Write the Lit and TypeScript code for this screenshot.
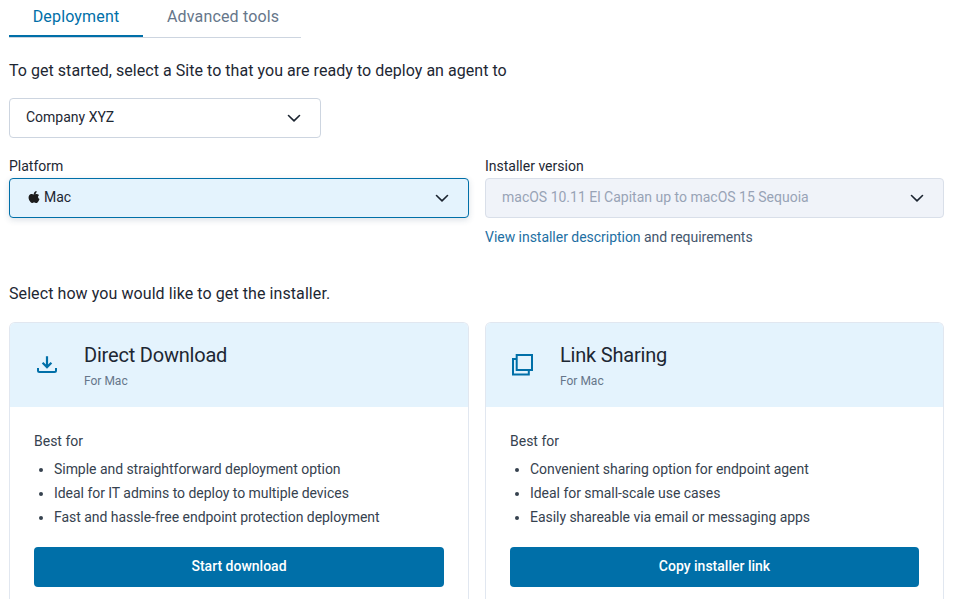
import { LitElement, html, css, svg } from "lit";
import { customElement } from "lit/decorators.js";

const chevron = html`<svg class="chev" width="16" height="16" viewBox="0 0 16 16" fill="none"><path d="M2.500 5.500 8 10.800l5.500-5.300" stroke="#1b2430" stroke-width="1.600" stroke-linecap="round" stroke-linejoin="round"/></svg>`;
const apple = html`<svg class="apple" width="14" height="14" viewBox="0 0 14 14"><path fill="#1c1c1c" d="M9.600 1c.1 1-.3 1.800-.8 2.400-.5.600-1.300 1-2 .9-.1-.9.3-1.800.8-2.300C8.100 1.400 8.900 1 9.600 1zM12.100 5c-1.600.9-1.400 3.300.4 4.100-.4 1-.8 1.800-1.400 2.600-.5.700-1.100 1.300-1.900 1.300-.8 0-1.100-.5-2.100-.5s-1.300.5-2.100.5c-.8 0-1.400-.7-1.900-1.400C1.500 9.700 1 6.900 2.200 5.300c.6-.9 1.600-1.400 2.500-1.400.9 0 1.600.5 2.200.5.6 0 1.400-.6 2.500-.5.900 0 1.900.4 2.700 1.100z"/></svg>`;
const download = svg`<path d="M12 3.200V14M7.600 9.800l4.400 4.300 4.400-4.300" fill="none" stroke="#006fa8" stroke-width="2.200"/><path d="M3 15v2.500C3 18.500 3.500 19 4.500 19h15c1 0 1.500-.5 1.500-1.500V15" fill="none" stroke="#006fa8" stroke-width="2"/>`;
const copy = svg`<rect x="5.700" y="2" width="15.300" height="15" fill="none" stroke="#006fa8" stroke-width="2"/><path d="M5 6H2v15.600h15.800V18" fill="none" stroke="#006fa8" stroke-width="2"/>`;

@customElement("app-root")
export class AppRoot extends LitElement {
  static styles = css`
    :host { display: block; font-family: Roboto, "Liberation Sans", sans-serif; color: #1d2733; font-size: 14px; }
    * { box-sizing: border-box; }
    .page { padding: 0 9px; height: 599px; overflow: hidden; }
    .tabs { display: flex; width: 292px; height: 38px; border-bottom: 1px solid #cdd5e0; margin-bottom: 21px; }
    .tab { height: 37px; font-size: 16px; line-height: 34px; color: #66768a; letter-spacing: 0.16px; text-align: center; }
    .tab.active { width: 134px; color: #006fa8; border-bottom: 2px solid #006fa8; }
    .tab.other { margin-left: 24px; }
    .lead { font-size: 16px; line-height: 24px; margin: 0; letter-spacing: 0.04px; }
    .site { width: 312px; margin-top: 15px; margin-bottom: 18px; }
    .select { height: 40px; display: flex; align-items: center; justify-content: space-between; padding: 0 18px 0 16px; border: 1px solid #cdd5e0; border-radius: 4px; background: #fff; font-size: 14px; }
    .select .val { display: flex; align-items: center; gap: 3px; padding-bottom: 2px; }
    .select.focus { border-color: #006fa8; background: #e4f3fd; box-shadow: 0 2px 6px rgba(40, 70, 100, 0.16); }
    .select.disabled { background: #f0f3f9; color: #98a3b6; border-color: #d9dfe9; }
    .apple { margin-left: 1px; }
    .cols { display: grid; grid-template-columns: 460px 459px; gap: 16px; }
    .label { font-size: 14px; line-height: 20px; margin-bottom: 2px; }
    .link { margin-top: 9px; line-height: 20px; color: #44566c; letter-spacing: -0.03px; }
    .link a { color: #1d6fa3; text-decoration: none; }
    .sub { font-size: 16px; line-height: 24px; margin: 35px 0 16px; letter-spacing: 0.08px; }
    .card { border: 1px solid #e1e7f0; border-bottom: none; border-radius: 6px 6px 0 0; height: 300px; }
    .head { height: 84px; background: #e4f3fd; border-radius: 5px 5px 0 0; display: flex; align-items: center; padding-left: 25px; }
    .ico { width: 24px; height: 24px; flex: none; margin-right: 25px; }
    .title { font-size: 20px; line-height: 28px; color: #1d2733; letter-spacing: -0.2px; }
    .for { font-size: 12px; line-height: 18px; color: #66768a; margin-top: 3px; }
    .body { padding: 24px 24px 0; }
    .best { line-height: 20px; color: #36424f; }
    ul { margin: 6px 0 0; padding: 0 0 0 20px; color: #36424f; }
    li { line-height: 24px; letter-spacing: -0.04px; }
    button { display: block; width: 100%; height: 40px; margin-top: 18px; padding: 0 0 2px; background: #006fa8; color: #fff; border: none; border-radius: 4px; font: 500 14px Roboto, sans-serif; }
  `;

  card(icon: unknown, title: string, items: string[], cta: string) {
    return html`<div class="card">
      <div class="head">
        <svg class="ico" viewBox="0 0 24 24">${icon}</svg>
        <div>
          <div class="title">${title}</div>
          <div class="for">For Mac</div>
        </div>
      </div>
      <div class="body">
        <div class="best">Best for</div>
        <ul>${items.map((i) => html`<li>${i}</li>`)}</ul>
        <button>${cta}</button>
      </div>
    </div>`;
  }

  render() {
    return html`<div class="page">
      <div class="tabs">
        <div class="tab active">Deployment</div>
        <div class="tab other">Advanced tools</div>
      </div>
      <p class="lead">To get started, select a Site to that you are ready to deploy an agent to</p>
      <div class="select site"><span class="val">Company XYZ</span>${chevron}</div>
      <div class="cols">
        <div>
          <div class="label">Platform</div>
          <div class="select focus"><span class="val">${apple}Mac</span>${chevron}</div>
        </div>
        <div>
          <div class="label">Installer version</div>
          <div class="select disabled"><span class="val">macOS 10.11 El Capitan up to macOS 15 Sequoia</span>${chevron}</div>
          <div class="link"><a href="#">View installer description</a> and requirements</div>
        </div>
      </div>
      <p class="sub">Select how you would like to get the installer.</p>
      <div class="cols">
        ${this.card(download, "Direct Download", ["Simple and straightforward deployment option", "Ideal for IT admins to deploy to multiple devices", "Fast and hassle-free endpoint protection deployment"], "Start download")}
        ${this.card(copy, "Link Sharing", ["Convenient sharing option for endpoint agent", "Ideal for small-scale use cases", "Easily shareable via email or messaging apps"], "Copy installer link")}
      </div>
    </div>`;
  }
}
